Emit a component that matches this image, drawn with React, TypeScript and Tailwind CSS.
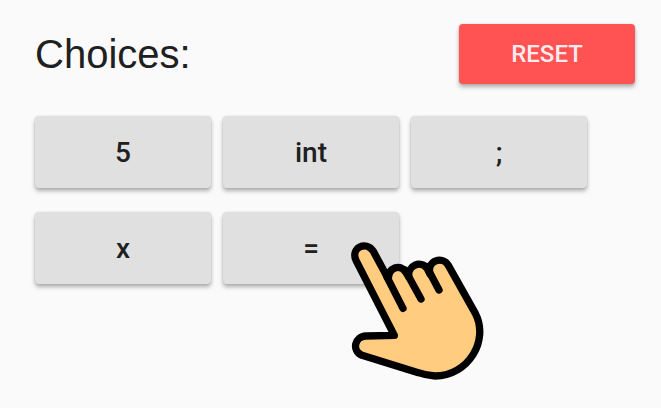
const choices = ["5", "int", ";", "x", "="];

const raised =
  "rounded font-[Roboto,sans-serif] font-medium shadow-[0_3px_4px_rgba(0,0,0,0.3),0_0_2px_rgba(0,0,0,0.12)]";

function PointingHand() {
  return (
    <svg
      viewBox="0 0 480 480"
      className="pointer-events-none absolute top-[230px] left-[340px] size-40"
      fill="none"
      stroke="#000"
      strokeWidth="22"
      strokeLinecap="round"
      strokeLinejoin="round"
      aria-hidden="true"
    >
      <path
        fill="#ffcc80"
        d="M163 316 L48 91 C31 54 78 31 100 64 L145 147 C145 113 180 100 197 126 L207 142 C200 106 244 89 262 116 L270 132 C260 91 308 77 325 106 L406 250 C448 331 386 437 285 438 Q260 437 235 428 L66 376 C34 361 44 319 78 318 Z"
      />
      <path d="M140 139 L189 235 M195 120 L243 207 M260 110 L297 180" />
    </svg>
  );
}

export default function App() {
  return (
    <main className="relative min-h-screen bg-[#fafafa] pt-6 pr-[26px] pb-6 pl-[35px] text-[#202020]">
      <header className="flex items-center justify-between">
        <h1 className="font-['Liberation_Sans',Arial,sans-serif] text-[40px] leading-[60px]">
          Choices:
        </h1>
        <button
          type="button"
          className={`h-[60px] w-44 bg-[#ff5252] text-2xl text-[#ffebee] ${raised}`}
        >
          RESET
        </button>
      </header>
      <section className="mt-8 flex flex-wrap gap-x-3 gap-y-6" aria-label="Choices">
        {choices.map((choice) => (
          <button
            key={choice}
            type="button"
            className={`h-[72px] w-44 bg-[#e0e0e0] pt-0.5 text-[28px] ${raised}`}
          >
            {choice}
          </button>
        ))}
      </section>
      <PointingHand />
    </main>
  );
}
